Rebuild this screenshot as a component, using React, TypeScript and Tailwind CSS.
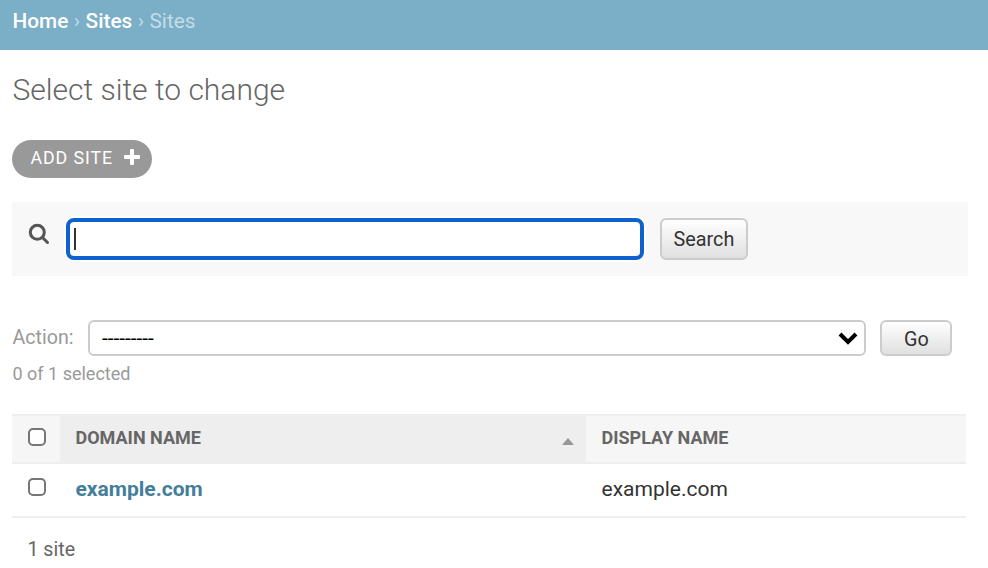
const box = "size-[18px] shrink-0 rounded-[5px] border-2 border-[#767676] bg-white";
const button = "rounded-[6px] border-2 border-[#ccc] bg-linear-to-b from-white to-[#e0e0e0] text-[19.8px]";

export default function App() {
  return (
    <div className="h-[568px] w-[988px] overflow-hidden bg-white font-['Roboto',sans-serif] text-[#333]">
      <nav className="flex h-[50px] gap-[5.5px] bg-[#7baec7] pl-[12.5px] pt-2 text-[20.8px] leading-[26px] text-[#c4dce8]">
        <a className="font-medium text-white">Home</a><span>›</span>
        <a className="font-medium text-white">Sites</a><span>›</span>
        <span>Sites</span>
      </nav>
      <main className="pl-3">
        <h1 className="mt-[20px] h-10 pl-[0.5px] text-[30px] font-light leading-10 text-[#666]">Select site to change</h1>
        <a className="mt-[30px] flex h-[38px] w-[140px] items-start rounded-full bg-[#999] pl-[18.5px] pt-[5px] text-[17.8px] leading-[26px] tracking-[0.9px] text-white">
          ADD SITE
          <svg className="ml-[11px] mt-1 size-4 shrink-0" viewBox="0 0 16 16" fill="#fff"><path d="M7 0h2q1 0 1 1v5h5q1 0 1 1v2q0 1-1 1h-5v5q0 1-1 1H7q-1 0-1-1v-5H1q-1 0-1-1V7q0-1 1-1h5V1q0-1 1-1z" /></svg>
        </a>
        <form className="mt-6 flex h-[74px] w-[956px] items-start bg-[#f8f8f8] pl-4 pt-4">
          <svg className="mt-[5px] size-[22px]" viewBox="0 0 22 22" fill="none" stroke="#555" strokeWidth="3" strokeLinecap="round"><circle cx="9.3" cy="9.3" r="7" /><path d="M14.5 14.5l5 5" /></svg>
          <div className="ml-4 flex h-[42px] w-[578px] items-center rounded-[8px] border-4 border-[#0f62cc] bg-white pl-1 ring-2 ring-white"><span className="h-[22px] w-[2px] bg-[#333]" /></div>
          <button className={`ml-4 h-[42px] w-[88px] pt-[2px] ${button}`}>Search</button>
        </form>
        <div className="mt-11 flex h-9 items-center">
          <span className="w-[76px] pb-px pl-[0.5px] text-[19.6px] text-[#999]">Action:</span>
          <div className="flex h-9 w-[778px] items-center justify-between rounded-[6px] border-2 border-[#ccc] pl-3 pr-[6px] text-[20.8px] text-black">
            <span className="pt-[2px]">---------</span>
            <svg className="h-4 w-5" viewBox="0 0 20 16" fill="none" stroke="#000" strokeWidth="4"><path d="M2 4l8 8 8-8" /></svg>
          </div>
          <button className={`ml-[14px] h-9 w-[72px] pl-px pt-[4px] leading-[26px] ${button}`}>Go</button>
        </div>
        <p className="mt-[6px] h-6 pl-[0.5px] text-[18px] leading-6 text-[#999]">0 of 1 selected</p>
        <div className="mt-[28px] w-[954px]">
          <div className="flex h-[50px] border-y-2 border-[#eee] bg-[#f6f6f6] text-[18px] font-bold text-[#666]">
            <div className="w-12 pl-4 pt-3"><div className={box} /></div>
            <div className="flex w-[526px] items-center justify-between bg-[#eee] pb-[3px] pl-[15.5px] pr-[12px]"><span>DOMAIN NAME</span><span className="mt-2 border-x-[6px] border-b-[7px] border-x-transparent border-b-[#999]" /></div>
            <div className="flex items-center pb-[3px] pl-[15.5px]">DISPLAY NAME</div>
          </div>
          <div className="flex h-[54px] items-start border-b-2 border-[#eee] pt-[12px] text-[21px] leading-[26px]">
            <div className="w-[63.5px] pl-4 pt-[2px]"><div className={box} /></div>
            <a className="w-[526px] font-bold text-[#447e9b]">example.com</a>
            <span>example.com</span>
          </div>
        </div>
        <p className="pl-[15.5px] pt-[19px] text-[19.6px] leading-[26px] text-[#666]">1 site</p>
      </main>
    </div>
  );
}
